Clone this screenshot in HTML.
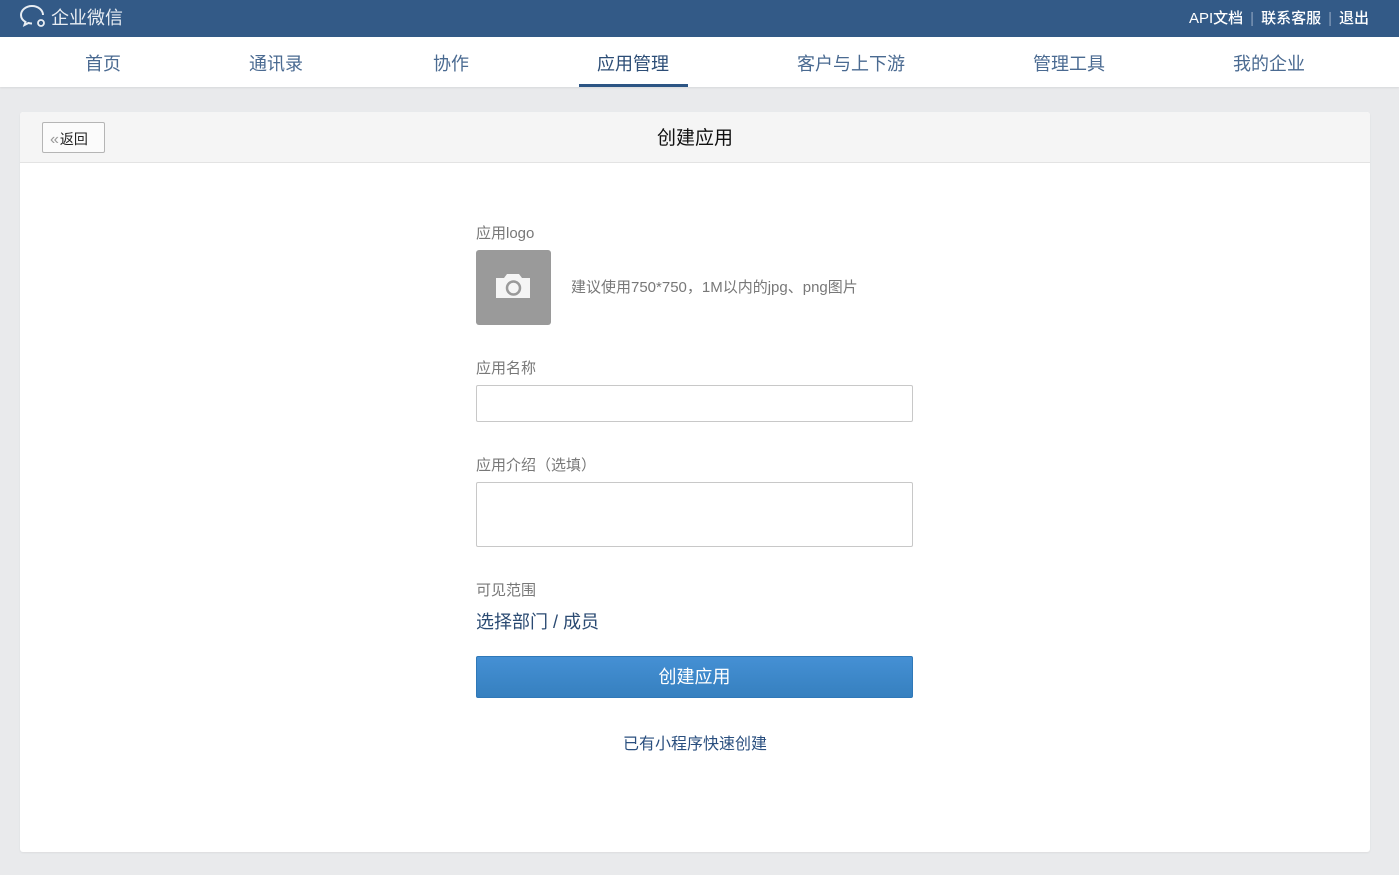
<!DOCTYPE html>
<html><head><meta charset="utf-8"><style>
*{box-sizing:border-box;margin:0;padding:0}
body{width:1399px;height:875px;background:#e9eaec;font-family:"Liberation Sans","Noto Sans CJK SC",sans-serif;position:relative;overflow:hidden}
.top{position:absolute;left:0;top:0;width:1399px;height:37px;background:#335a87;color:#fff}
.logo{position:absolute;left:19px;top:4px;font-size:18px;color:#e8edf3;display:flex;align-items:center}
.tr{position:absolute;right:30px;top:7px;font-size:15px;color:#fff;font-weight:500}
.tr .sep{color:#8aa0bd;margin:0 7px;font-weight:normal}
.nav{position:absolute;left:0;top:37px;width:1399px;height:50px;background:#fff;box-shadow:0 1px 2px rgba(0,0,0,.08)}
.nav span{position:absolute;top:13px;font-size:18px;color:#4a6a91;transform:translateX(-50%);white-space:nowrap}
.ul{position:absolute;left:579px;top:47px;width:109px;height:3px;background:#2c5584}
.card{position:absolute;left:20px;top:112px;width:1350px;height:740px;background:#fff;border-radius:3px;box-shadow:0 1px 2px rgba(0,0,0,.06)}
.hd{height:51px;background:#f5f5f5;border-bottom:1px solid #e3e3e3;border-radius:3px 3px 0 0;position:relative}
.back{position:absolute;left:22px;top:10px;width:63px;height:31px;border:1px solid #b5b5b5;border-radius:2px;background:#fbfbfb;font-size:14px;color:#222;padding:6px 0 0 7px}
.back i{font-style:normal;color:#999;margin-right:1px;font-size:16px}
.title{position:absolute;left:0;right:0;top:11px;text-align:center;font-size:19px;color:#111}
.lbl{position:absolute;left:476px;font-size:15px;color:#787878}
.inp{position:absolute;left:476px;width:437px;border:1px solid #c8c8c8;border-radius:2px;background:#fff}
</style></head><body>
<div class="top">
 <div class="logo"><svg width="30" height="26" viewBox="0 0 30 26"><path d="M13 2C7 2 2 6 2 11c0 3 2 5.5 4.5 7l-1 3 4-2c1 .3 2.3.5 3.5.5" fill="none" stroke="#e8edf3" stroke-width="2"/><path d="M13 2c6 0 11 4 11 9" fill="none" stroke="#e8edf3" stroke-width="2"/><circle cx="22" cy="19" r="3" fill="none" stroke="#e8edf3" stroke-width="1.8"/></svg><span style="margin-left:2px">企业微信</span></div>
 <div class="tr">API文档<span class="sep">|</span>联系客服<span class="sep">|</span>退出</div>
</div>
<div class="nav">
 <span style="left:103px">首页</span><span style="left:276px">通讯录</span><span style="left:451px">协作</span><span style="left:633px;color:#2c4d76">应用管理</span><span style="left:851px">客户与上下游</span><span style="left:1069px">管理工具</span><span style="left:1269px">我的企业</span>
 <div class="ul"></div>
</div>
<div class="card">
 <div class="hd"><div class="back"><i>«</i>返回</div><div class="title">创建应用</div></div>
</div>
<div class="lbl" style="top:222px">应用logo</div>
<div style="position:absolute;left:476px;top:250px;width:75px;height:75px;background:#9a9a9a;border-radius:3px">
 <svg width="75" height="75" viewBox="0 0 75 75"><path d="M20 28h8l3-4h12l3 4h8v20H20z" fill="#f5f5f5"/><circle cx="37.5" cy="38" r="6.5" fill="none" stroke="#9a9a9a" stroke-width="2.5"/></svg>
</div>
<div class="lbl" style="top:276px;left:571px">建议使用750*750，1M以内的jpg、png图片</div>
<div class="lbl" style="top:357px">应用名称</div>
<div class="inp" style="top:385px;height:37px"></div>
<div class="lbl" style="top:454px">应用介绍（选填）</div>
<div class="inp" style="top:482px;height:65px"></div>
<div class="lbl" style="top:579px">可见范围</div>
<div style="position:absolute;left:476px;top:608px;font-size:18px;color:#2a4a72">选择部门 / 成员</div>
<div style="position:absolute;left:476px;top:656px;width:437px;height:42px;background:linear-gradient(#4590d4,#3680bf);border:1px solid #2f78b8;border-radius:2px;color:#fff;font-size:18px;text-align:center;line-height:40px">创建应用</div>
<div style="position:absolute;left:0;width:1390px;top:730px;text-align:center;font-size:16px;color:#2a4f7f">已有小程序快速创建</div>
</body></html>
